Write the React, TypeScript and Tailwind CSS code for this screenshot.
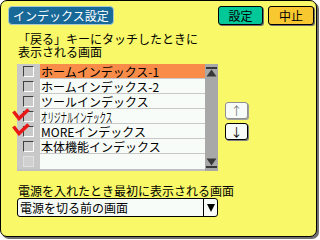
const font = { fontFamily: '"Noto Sans CJK JP", "Noto Sans", sans-serif' };

const rows = [
  { label: "ホームインデックス-1", checked: false, active: true },
  { label: "ホームインデックス-2", checked: false },
  { label: "ツールインデックス", checked: false },
  { label: "オリジナルインデックス", checked: true, narrow: true },
  { label: "MOREインデックス", checked: true },
  { label: "本体機能インデックス", checked: false },
  { label: "", checked: false, empty: true },
];

const Check = () => (
  <svg width="18" height="13" viewBox="0 0 18 13" className="absolute left-[-5px] top-[-1px]">
    <path d="M1.5 3.5 L7 10.5 L16.5 1.5" stroke="#e81818" strokeWidth="3.5" fill="none" strokeLinejoin="miter" />
  </svg>
);

const ScrollArrow = ({ down }: { down?: boolean }) => (
  <svg width="11" height="10" viewBox="0 0 11 10">
    {down ? (
      <>
        <path d="M0.5 0.5 L10.5 0.5 L5.5 7.5 Z" fill="#383838" />
        <rect x="0" y="8" width="11" height="2" fill="#383838" />
      </>
    ) : (
      <>
        <rect x="0" y="0" width="11" height="2" fill="#383838" />
        <path d="M0.5 9.5 L10.5 9.5 L5.5 2.5 Z" fill="#383838" />
      </>
    )}
  </svg>
);

export default function App() {
  return (
    <div className="w-[320px] h-[240px] bg-white" style={font}>
      <div className="w-[317px] h-[237px] border border-black rounded-[7px] bg-[#f8f868] shadow-[2px_2px_0_#707070] flex flex-col text-[12px] text-black leading-[13px]">
        <div className="flex items-start justify-between pl-[7px] pr-[2px] pt-[5px]">
          <div className="h-[19px] px-[4px] bg-[#186898] text-white rounded-[4px] border border-[#a8c8d8] flex items-center">
            インデックス設定
          </div>
          <div className="flex gap-[5px]">
            <div className="w-[45px] h-[19px] bg-[#00c898] border border-black rounded-[3px] shadow-[1px_1px_0_#707070] flex items-center justify-center">
              設定
            </div>
            <div className="w-[46px] h-[19px] bg-[#f8c830] border border-black rounded-[3px] shadow-[1px_1px_0_#707070] flex items-center justify-center">
              中止
            </div>
          </div>
        </div>

        <div className="pl-[17px] mt-[7px]">
          <div>「戻る」キーにタッチしたときに</div>
          <div>表示される画面</div>
        </div>

        <div className="flex items-start mt-[6px] pl-[16px]">
          <div className="flex w-[201px] h-[107px] bg-[#c0c0c0]">
            <div className="flex-1 flex flex-col">
              {rows.map((r, i) => (
                <div key={i} className="flex h-[15px] border-b border-[#c8c8c8] last:border-b-0">
                  <div className="w-[23px] bg-[#c8c8c8] flex items-center justify-center relative">
                    <div
                      className={
                        r.empty
                          ? "w-[11px] h-[11px] border border-[#e0e0e0] bg-[#d0d0d0]"
                          : "w-[11px] h-[11px] border-t border-l border-[#404040] border-r border-b border-r-white border-b-white bg-[#c8c8c8]"
                      }
                    />
                    {r.checked && <Check />}
                  </div>
                  <div
                    className={
                      "flex-1 flex items-center pl-[1px] whitespace-nowrap leading-[13px] " +
                      (r.active ? "bg-[#f88c48]" : "bg-[#f8fcf8]")
                    }
                  >
                    {r.narrow ? (
                      <span className="inline-block scale-x-50 origin-left text-[13px]">{r.label}</span>
                    ) : (
                      r.label
                    )}
                  </div>
                </div>
              ))}
            </div>
            <div className="w-[13px] bg-[#a8a8a8] flex flex-col justify-between items-center py-[3px]">
              <ScrollArrow />
              <ScrollArrow down />
            </div>
          </div>

          <div className="flex flex-col gap-[4px] ml-[7px] mt-[38px]">
            <div className="w-[23px] h-[17px] bg-[#f8fcf8] border border-[#909090] rounded-[3px] shadow-[1px_1px_0_#a0a0a0] flex items-center justify-center text-[#808080]">
              ↑
            </div>
            <div className="w-[23px] h-[17px] bg-[#f8fcf8] border border-black rounded-[3px] shadow-[1px_1px_0_#808080] flex items-center justify-center">
              ↓
            </div>
          </div>
        </div>

        <div className="pl-[17px] mt-[13px]">電源を入れたとき最初に表示される画面</div>
        <div className="ml-[16px] mt-[1px] w-[201px] h-[19px] bg-[#f8fcf8] border border-black rounded-[3px] flex">
          <div className="flex-1 flex items-center pl-[2px]">電源を切る前の画面</div>
          <div className="w-[14px] border-l border-black flex items-center justify-center">
            <svg width="8" height="9" viewBox="0 0 8 9">
              <path d="M0 1 L8 1 L4 9 Z" fill="#000" />
            </svg>
          </div>
        </div>
      </div>
    </div>
  );
}
